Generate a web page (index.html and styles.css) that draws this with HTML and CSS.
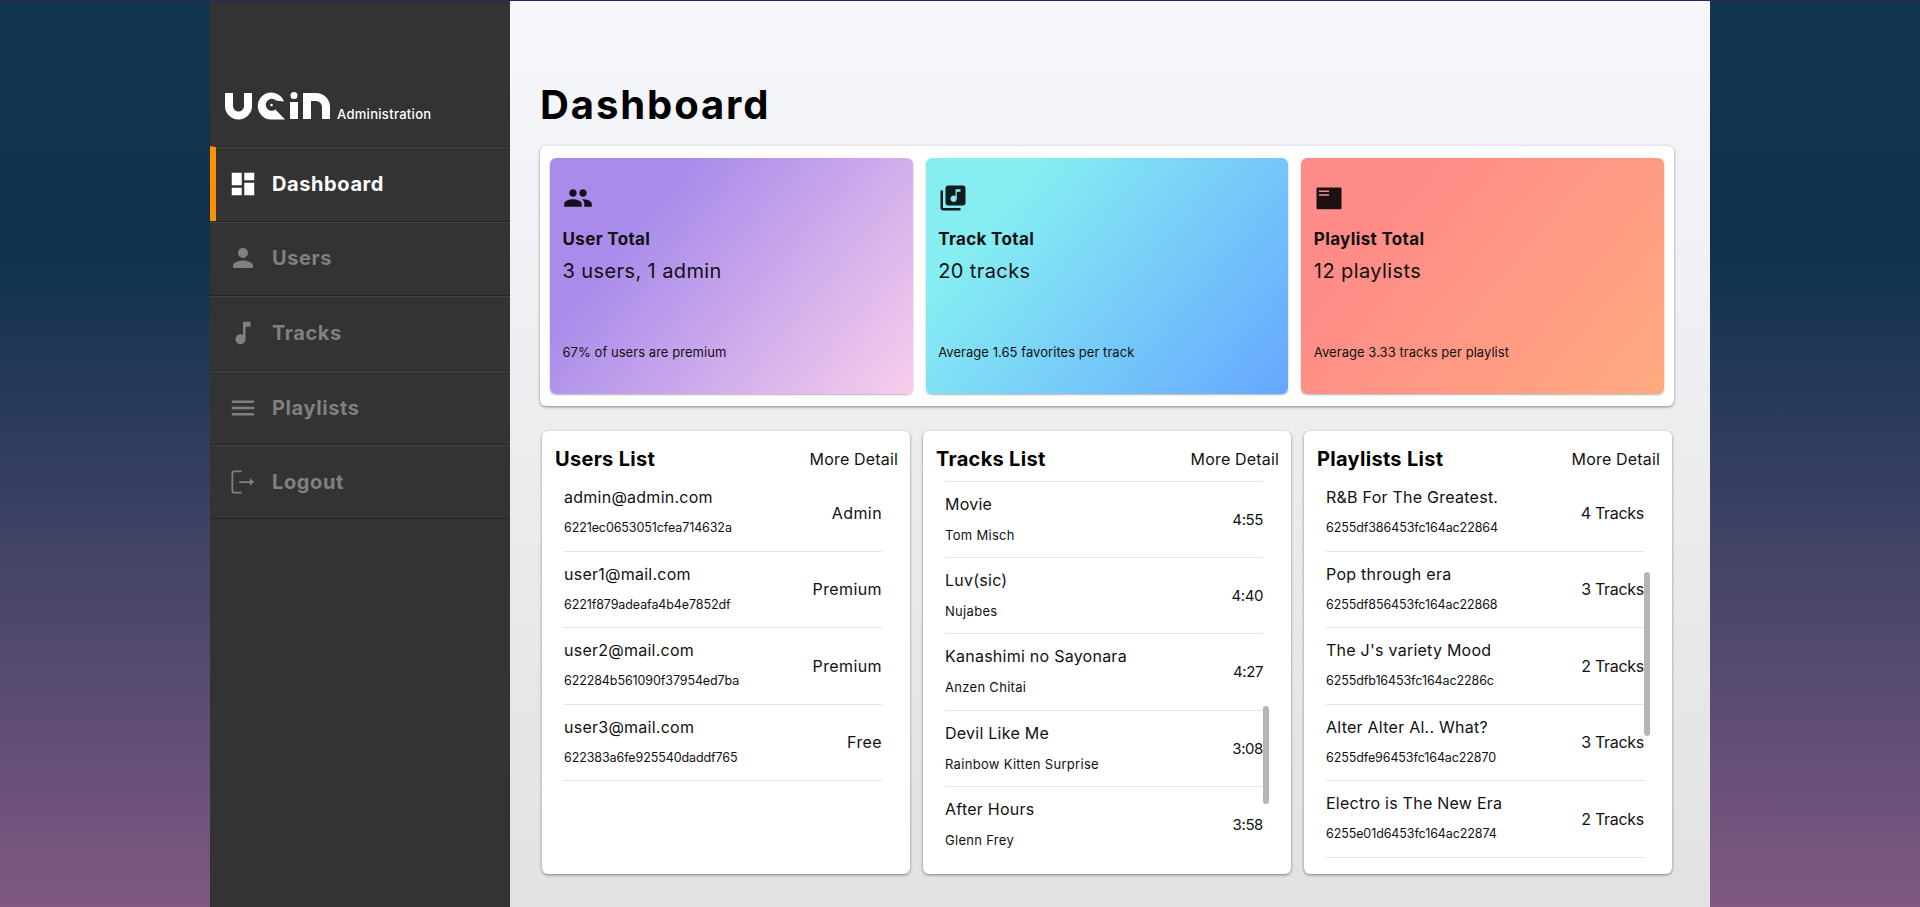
FILE: index.html
```html
<!DOCTYPE html>
<html>

<head>
  <link rel="stylesheet" href="styles.css">
</head>

<body>
  <div class="top-line"></div>
  <div class="app">
    <aside class="sidebar">
      <div class="brand">
        <svg class="logo" viewBox="0 0 106 28">
          <path d="M4 1V14A9.5 9.5 0 0 0 23 14V1" fill="none" stroke="#fff" stroke-width="8" />
          <path d="M59 9.500A13.500 13.500 0 1 0 46 27.500H60L50.500 17.500A6 6 0 1 1 51 8.500z" fill="#fff" />
          <circle cx="46.500" cy="13" r="1.300" fill="#fff" />
          <circle cx="69" cy="3.500" r="3.500" fill="#fff" />
          <rect x="65" y="10" width="8" height="17" fill="#fff" />
          <path d="M82 27V5H91A10 10 0 0 1 101 15V27" fill="none" stroke="#fff" stroke-width="8" />
        </svg>
        <span class="brand-sub">Administration</span>
      </div>
      <nav class="nav">
        <a class="nav-item active">
          <svg viewBox="0 0 24 24"><path d="M3 13h8V3H3v10zm0 8h8v-6H3v6zm10 0h8V11h-8v10zm0-18v6h8V3h-8z" /></svg>
          Dashboard
        </a>
        <a class="nav-item">
          <svg viewBox="0 0 24 24"><path d="M12 12c2.21 0 4-1.79 4-4s-1.79-4-4-4-4 1.79-4 4 1.79 4 4 4zm0 2c-2.67 0-8 1.34-8 4v2h16v-2c0-2.66-5.33-4-8-4z" /></svg>
          Users
        </a>
        <a class="nav-item">
          <svg viewBox="0 0 24 24"><path d="M12 3v10.55c-.59-.34-1.27-.55-2-.55-2.21 0-4 1.79-4 4s1.79 4 4 4 4-1.79 4-4V7h4V3h-6z" /></svg>
          Tracks
        </a>
        <a class="nav-item">
          <svg viewBox="0 0 24 24"><path d="M3 18h18v-2H3v2zm0-5h18v-2H3v2zm0-7v2h18V6H3z" /></svg>
          Playlists
        </a>
        <a class="nav-item">
          <svg viewBox="0 0 24 24"><path d="M11 3.500H5A1.500 1.500 0 0 0 3.500 5v14A1.500 1.500 0 0 0 5 20.500h6" fill="none" stroke="currentColor" stroke-width="1.400" /><path d="M9 11.300h8.500V9l3.500 3-3.500 3v-2.300H9z" /></svg>
          Logout
        </a>
      </nav>
    </aside>

    <main class="content">
      <h1 class="page-title">Dashboard</h1>

      <section class="totals">
        <div class="total-card purple">
          <svg viewBox="0 0 24 24"><path d="M16 11c1.66 0 2.99-1.34 2.99-3S17.660 5 16 5c-1.660 0-3 1.340-3 3s1.340 3 3 3zm-8 0c1.660 0 2.990-1.340 2.990-3S9.660 5 8 5C6.340 5 5 6.340 5 8s1.340 3 3 3zm0 2c-2.330 0-7 1.170-7 3.500V19h14v-2.500c0-2.330-4.670-3.500-7-3.500zm8 0c-.29 0-.62.02-.97.05 1.160.84 1.970 1.970 1.970 3.450V19h6v-2.500c0-2.330-4.670-3.500-7-3.500z" /></svg>
          <h3>User Total</h3>
          <p class="total-value">3 users, 1 admin</p>
          <p class="total-note">67% of users are premium</p>
        </div>
        <div class="total-card blue">
          <svg viewBox="0 0 24 24"><path d="M20 2H8c-1.100 0-2 .9-2 2v12c0 1.100.9 2 2 2h12c1.100 0 2-.9 2-2V4c0-1.100-.9-2-2-2zm-2 5h-3v5.500c0 1.380-1.120 2.500-2.500 2.500S10 13.880 10 12.500s1.120-2.500 2.500-2.500c.57 0 1.080.19 1.500.51V5h4v2zM4 6H2v14c0 1.100.9 2 2 2h14v-2H4V6z" /></svg>
          <h3>Track Total</h3>
          <p class="total-value">20 tracks</p>
          <p class="total-note">Average 1.65 favorites per track</p>
        </div>
        <div class="total-card red">
          <svg viewBox="0 0 24 24"><path fill-rule="evenodd" d="M3 3.500h18a1 1 0 0 1 1 1v15.500a1 1 0 0 1-1 1H3a1 1 0 0 1-1-1V4.500a1 1 0 0 1 1-1zM4 6v1.200h8V6zm0 3v1.200h8V9z" /></svg>
          <h3>Playlist Total</h3>
          <p class="total-value">12 playlists</p>
          <p class="total-note">Average 3.33 tracks per playlist</p>
        </div>
      </section>

      <section class="lists">
        <div class="list-card">
          <div class="list-head">
            <h2>Users List</h2>
            <a>More Detail</a>
          </div>
          <div class="list-body">
            <div class="row">
              <div><p class="row-name">admin@admin.com</p><p class="row-sub row-id">6221ec0653051cfea714632a</p></div>
              <span class="row-value">Admin</span>
            </div>
            <div class="row">
              <div><p class="row-name">user1@mail.com</p><p class="row-sub row-id">6221f879adeafa4b4e7852df</p></div>
              <span class="row-value">Premium</span>
            </div>
            <div class="row">
              <div><p class="row-name">user2@mail.com</p><p class="row-sub row-id">622284b561090f37954ed7ba</p></div>
              <span class="row-value">Premium</span>
            </div>
            <div class="row">
              <div><p class="row-name">user3@mail.com</p><p class="row-sub row-id">622383a6fe925540daddf765</p></div>
              <span class="row-value">Free</span>
            </div>
          </div>
        </div>

        <div class="list-card">
          <div class="list-head">
            <h2>Tracks List</h2>
            <a>More Detail</a>
          </div>
          <div class="list-body scrolled">
            <div class="row">
              <div><p class="row-name">Movie</p><p class="row-sub">Tom Misch</p></div>
              <span class="row-value time">4:55</span>
            </div>
            <div class="row">
              <div><p class="row-name">Luv(sic)</p><p class="row-sub">Nujabes</p></div>
              <span class="row-value time">4:40</span>
            </div>
            <div class="row">
              <div><p class="row-name">Kanashimi no Sayonara</p><p class="row-sub">Anzen Chitai</p></div>
              <span class="row-value time">4:27</span>
            </div>
            <div class="row">
              <div><p class="row-name">Devil Like Me</p><p class="row-sub">Rainbow Kitten Surprise</p></div>
              <span class="row-value time">3:08</span>
            </div>
            <div class="row">
              <div><p class="row-name">After Hours</p><p class="row-sub">Glenn Frey</p></div>
              <span class="row-value time">3:58</span>
            </div>
          </div>
          <div class="thumb thumb-tracks"></div>
        </div>

        <div class="list-card">
          <div class="list-head">
            <h2>Playlists List</h2>
            <a>More Detail</a>
          </div>
          <div class="list-body">
            <div class="row">
              <div><p class="row-name">R&amp;B For The Greatest.</p><p class="row-sub row-id">6255df386453fc164ac22864</p></div>
              <span class="row-value count">4 Tracks</span>
            </div>
            <div class="row">
              <div><p class="row-name">Pop through era</p><p class="row-sub row-id">6255df856453fc164ac22868</p></div>
              <span class="row-value count">3 Tracks</span>
            </div>
            <div class="row">
              <div><p class="row-name">The J's variety Mood</p><p class="row-sub row-id">6255dfb16453fc164ac2286c</p></div>
              <span class="row-value count">2 Tracks</span>
            </div>
            <div class="row">
              <div><p class="row-name">Alter Alter Al.. What?</p><p class="row-sub row-id">6255dfe96453fc164ac22870</p></div>
              <span class="row-value count">3 Tracks</span>
            </div>
            <div class="row">
              <div><p class="row-name">Electro is The New Era</p><p class="row-sub row-id">6255e01d6453fc164ac22874</p></div>
              <span class="row-value count">2 Tracks</span>
            </div>
          </div>
          <div class="thumb thumb-playlists"></div>
        </div>
      </section>
    </main>
  </div>
</body>

</html>
```

FILE: styles.css
```css
* {
  box-sizing: border-box;
}

html,
body {
  height: 100%;
}

body {
  margin: 0;
  overflow: hidden;
  display: flex;
  flex-direction: column;
  background: linear-gradient(180deg, #133650 0%, #0e314c 27%, #7f5883 100%);
  font-family: Inter, "Liberation Sans", sans-serif;
  color: #111;
}

h1,
h2,
h3,
p {
  margin: 0;
}

.top-line {
  height: 1px;
  flex: none;
  background: #2b2360;
}

.app {
  flex: 1;
  width: 1500px;
  margin: 0 auto;
  display: flex;
  min-height: 0;
}

/* sidebar */
.sidebar {
  width: 300px;
  flex: none;
  background: #333;
}

.brand {
  height: 145px;
  padding: 0 0 26px 15px;
  display: flex;
  align-items: flex-end;
  gap: 6px;
}

.logo {
  width: 106px;
  height: 28px;
  display: block;
}

.brand-sub {
  color: #fff;
  font-size: 13px;
  font-weight: 500;
  letter-spacing: 0.3px;
  line-height: 13px;
  margin-bottom: -1px;
}

.nav-item {
  height: 74.600px;
  display: flex;
  align-items: center;
  gap: 14px;
  padding-left: 18px;
  border-top: 1px solid #232323;
  box-shadow: inset 0 1px 0 #444;
  color: #808080;
  font-size: 20px;
  font-weight: 700;
  letter-spacing: 0.6px;
}

.nav-item:last-child {
  height: 75px;
  border-bottom: 1px solid #232323;
}

.nav-item svg {
  width: 30px;
  height: 30px;
  flex: none;
  fill: currentColor;
}

.nav-item.active {
  color: #fff;
  padding-left: 12px;
  border-left: 6px solid #ff9100;
}

/* main area */
.content {
  flex: 1;
  min-width: 0;
  padding: 0 36px 0 30px;
  background: linear-gradient(180deg, #f6f7fc 0%, #e2e2e2 100%);
}

.page-title {
  height: 145px;
  padding-top: 80px;
  font-size: 40px;
  line-height: 48px;
  font-weight: 700;
  letter-spacing: 1.900px;
  color: #000;
}

.totals {
  height: 260px;
  padding: 12px 10px;
  display: flex;
  gap: 13px;
  background: #fff;
  border-radius: 6px;
  box-shadow: 0 1px 3px rgba(0, 0, 0, 0.45);
}

.total-card {
  flex: 1;
  display: flex;
  flex-direction: column;
  padding: 25px 13px 34px 12.500px;
  border-radius: 6px;
  box-shadow: 0 1px 2px rgba(0, 0, 0, 0.3);
}

.purple {
  background: linear-gradient(130deg, #a88beb 25%, #f8ceec 100%);
}

.blue {
  background: linear-gradient(130deg, #86eef2 20%, #66a6ff 100%);
}

.red {
  background: linear-gradient(130deg, #ff8c88 25%, #ffaa80 100%);
}

.total-card svg {
  width: 30px;
  height: 30px;
  fill: #000;
  opacity: 0.88;
}

.total-card h3 {
  margin-top: 15px;
  font-size: 17px;
  line-height: 22px;
  font-weight: 700;
  letter-spacing: 0.35px;
}

.total-value {
  margin-top: 8px;
  font-size: 20px;
  line-height: 26px;
  letter-spacing: 0.4px;
}

.total-note {
  margin-top: auto;
  font-size: 13px;
  line-height: 16px;
  letter-spacing: 0.05px;
}

.lists {
  margin: 25px 2px 0;
  display: flex;
  gap: 13px;
}

.list-card {
  flex: 1;
  position: relative;
  height: 443px;
  background: #fff;
  border-radius: 6px;
  box-shadow: 0 1px 3px rgba(0, 0, 0, 0.45);
}

.list-head {
  height: 44px;
  padding: 12px 12px 0 13px;
  display: flex;
  align-items: center;
  justify-content: space-between;
}

.list-head h2 {
  font-size: 20px;
  font-weight: 700;
  letter-spacing: 0.3px;
  color: #000;
}

.list-head a {
  font-size: 16px;
  letter-spacing: 0.17px;
}

.list-body {
  height: 385px;
  overflow: hidden;
  margin: 0 28px 0 22px;
}

.list-body.scrolled {
  padding-top: 6px;
}

.list-body.scrolled .row:first-child {
  border-top: 1px solid #e4e4e4;
}

.row {
  height: 76.500px;
  display: flex;
  align-items: center;
  justify-content: space-between;
  border-bottom: 1px solid #e4e4e4;
}

.row-name {
  font-size: 16px;
  line-height: 20px;
  letter-spacing: 0.25px;
}

.row-sub {
  margin-top: 11px;
  font-size: 13px;
  line-height: 20px;
  letter-spacing: 0.3px;
}

.row-id {
  font-size: 12.500px;
  letter-spacing: -0.1px;
}

.row-value {
  font-size: 16px;
  letter-spacing: 0.4px;
}

.row-value.time {
  font-size: 15px;
  letter-spacing: -0.4px;
}

.row-value.count {
  letter-spacing: -0.3px;
}

/* scroll thumbs lie over the list */
.thumb {
  position: absolute;
  width: 6px;
  border-radius: 3px;
  background: #b5b5b5;
}

.thumb-tracks {
  right: 22px;
  top: 275px;
  height: 98px;
}

.thumb-playlists {
  right: 22px;
  top: 141px;
  height: 164px;
}
```
